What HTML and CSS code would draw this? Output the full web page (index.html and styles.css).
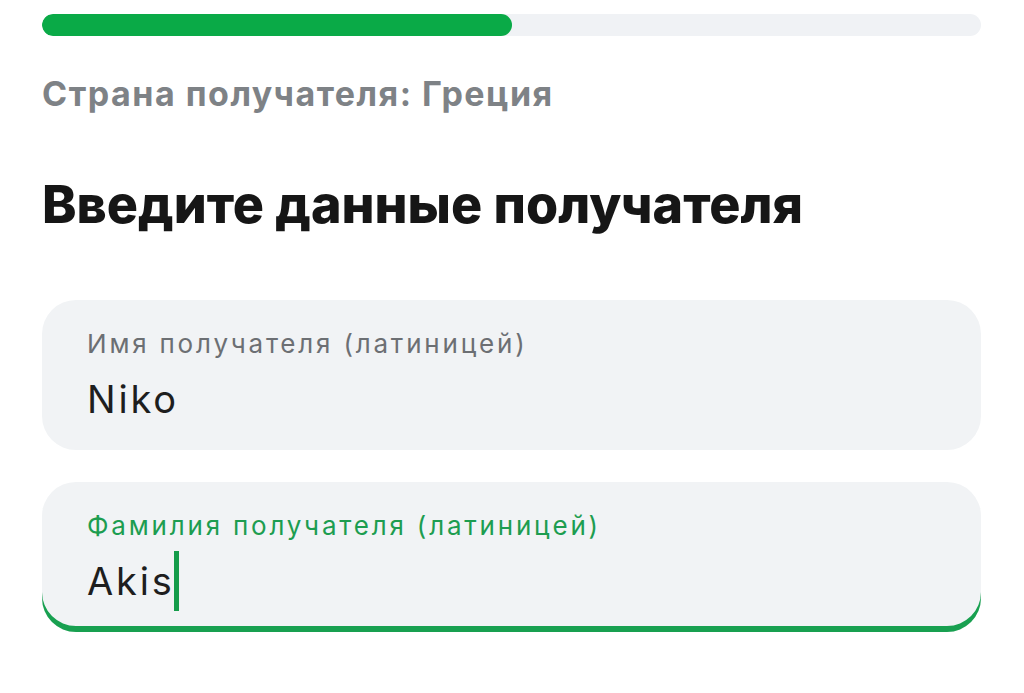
FILE: index.html
```html
<!DOCTYPE html>
<html lang="ru">
<head>
<meta charset="utf-8">
<link rel="stylesheet" href="styles.css">
</head>
<body>
<div class="page">
  <div class="progress"><div class="progress-fill" style="width:50%"></div></div>
  <p class="country">Страна получателя: Греция</p>
  <h1 class="title">Введите данные получателя</h1>
  <div class="fields">
    <div class="field">
      <div class="field-label">Имя получателя (латиницей)</div>
      <div class="field-value">Niko</div>
    </div>
    <div class="field field-active">
      <div class="field-label">Фамилия получателя (латиницей)</div>
      <div class="field-value">Akis<span class="caret"></span></div>
    </div>
  </div>
</div>
</body>
</html>
```
FILE: styles.css
```css
html, body {
  margin: 0;
  background: #ffffff;
}
body {
  font-family: "Inter", "Lato", sans-serif;
}
.page {
  padding: 14px 43px 0 42px;
}
.progress {
  height: 22px;
  border-radius: 11px;
  background: #f0f2f5;
  overflow: hidden;
}
.progress-fill {
  height: 100%;
  border-radius: 11px;
  background: #0aaa47;
}
.country {
  margin: 38px 0 0;
  font-size: 34px;
  font-weight: 700;
  letter-spacing: 1.5px;
  color: #7e8286;
  line-height: 40px;
}
.title {
  margin: 61px 0 0;
  font-size: 52px;
  font-weight: 800;
  color: #161616;
  line-height: 60px;
}
.fields {
  margin-top: 65px;
  display: flex;
  flex-direction: column;
  gap: 32px;
}
.field {
  height: 150px;
  box-sizing: border-box;
  background: #f1f3f5;
  border-radius: 34px;
  padding: 26px 45px 0;
}
.field-active {
  box-shadow: inset 0 -6px 0 #18a050;
}
.field-label {
  font-size: 26px;
  letter-spacing: 2.8px;
  color: #6c6f73;
  line-height: 36px;
}
.field-active .field-label {
  color: #1d9d50;
}
.field-value {
  margin-top: 7px;
  min-height: 60px;
  font-size: 38px;
  letter-spacing: 2.8px;
  color: #1e1e1e;
  line-height: 46px;
  display: flex;
  align-items: center;
}
.caret {
  display: inline-block;
  width: 5px;
  height: 60px;
  margin-left: -1px;
  background: #149c4a;
}
```
